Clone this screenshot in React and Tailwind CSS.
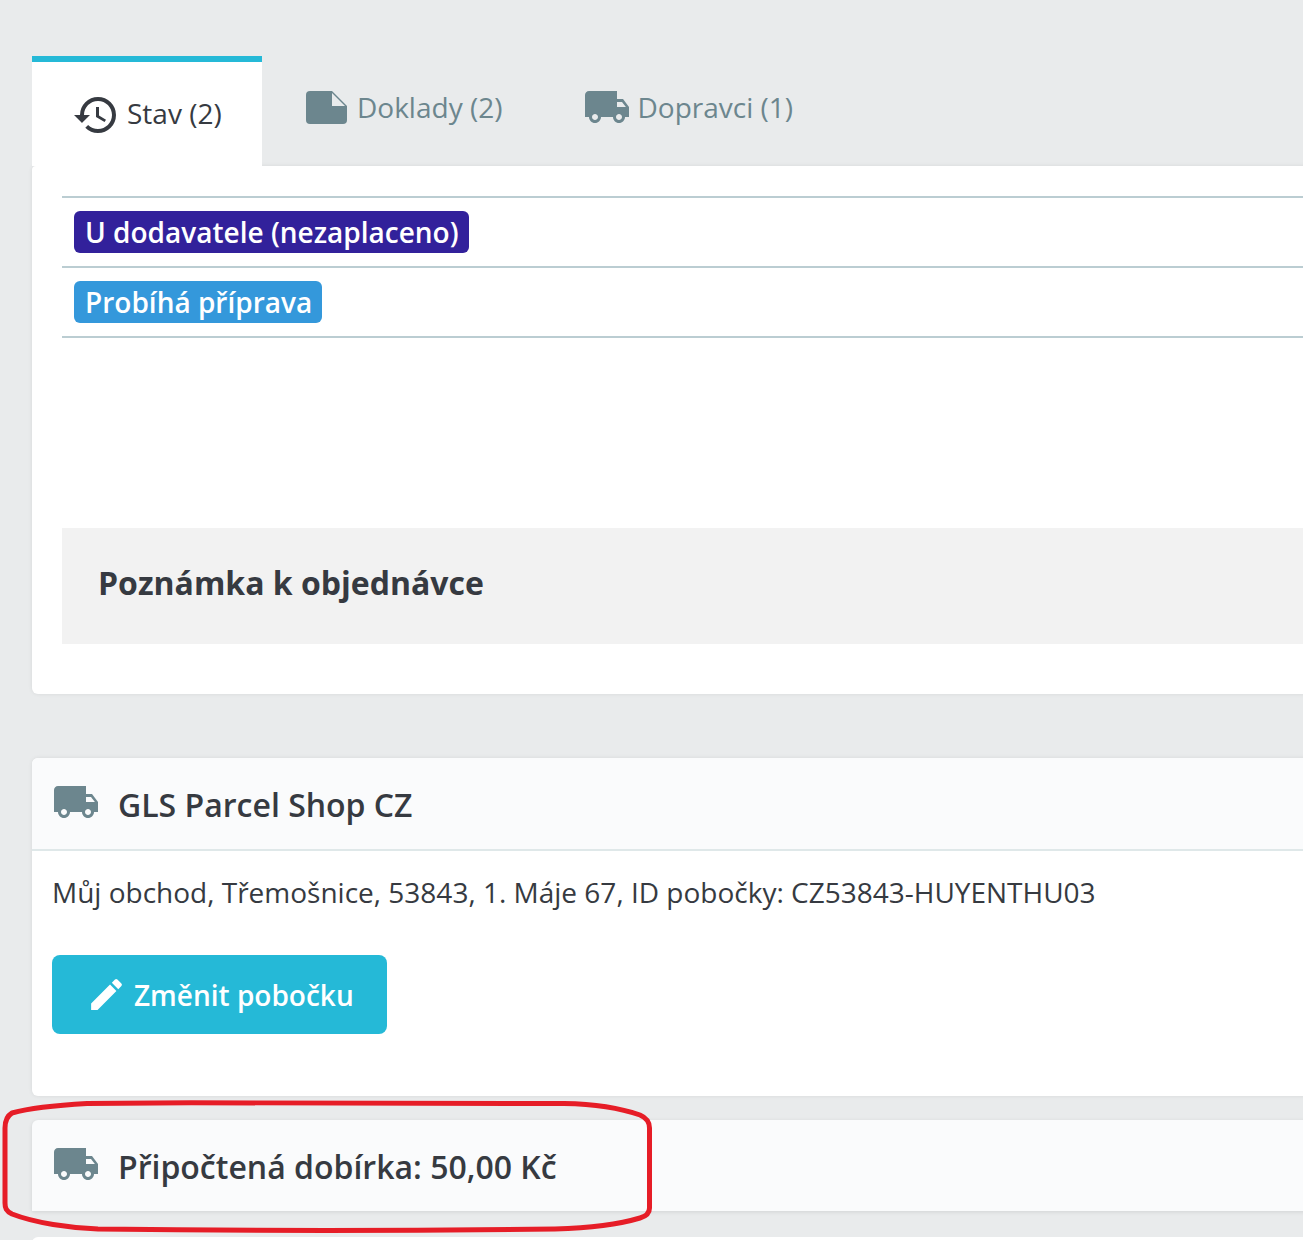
import React from 'react';
import { MdHistory, MdLocalShipping, MdEdit } from 'react-icons/md';

function FileIcon() {
    return (
        <svg width="41" height="33" viewBox="0 0 41 33" className="shrink-0">
            <path d="M4 0H26L41 15V29a4 4 0 0 1-4 4H4a4 4 0 0 1-4-4V4a4 4 0 0 1 4-4Z" fill="#6c868e" />
            <path d="M26 2V15H39Z" fill="#e9ebec" />
        </svg>
    );
}

// hand drawn marker round the last card
function Oval() {
    return (
        <svg className="absolute left-0 top-[1098px] pointer-events-none" width="660" height="136" viewBox="0 0 660 136" fill="none">
            <path
                d="M87 5.5C250 4 420 4 564 5.5C590 6 620 10 640 17C647 20 649.5 24 649.5 30V110C649.5 115 647 118 640 120C620 126 590 130 555 131C400 133 250 133 98 131C70 130 35 125 12 116C6 113 5 110 5 105V30C5 22 7 18 12 15C30 10 60 7 87 5.5Z"
                stroke="#e61d27"
                strokeWidth="5"
            />
        </svg>
    );
}

export default function App() {
    return (
        <div className="relative h-[1240px] w-[1303px] overflow-hidden bg-[#e9ebec] pt-14 pl-8 text-[#363a41] font-['Open_Sans',sans-serif]">
            {/* Tabs */}
            <div className="relative z-10 flex h-[110px] w-[1400px] items-start">
                <div className="flex h-[110px] w-[230px] items-center gap-[10px] border-t-[6px] border-[#25b9d7] bg-white pl-[41px] pb-[2px] text-[28px]">
                    <MdHistory size={48} className="-ml-[1px] -mr-[3px] mt-1 shrink-0" />
                    <span>Stav (2)</span>
                </div>
                <div className="flex items-center gap-[10px] pl-11 pt-[30px] text-[28px] text-[#6c868e]">
                    <FileIcon />
                    <span>Doklady (2)</span>
                </div>
                <div className="flex items-center gap-[6px] pl-[81px] pt-[30px] text-[28px] text-[#6c868e]">
                    <MdLocalShipping size={48} className="-my-2 shrink-0" />
                    <span>Dopravci (1)</span>
                </div>
            </div>

            {/* Stav */}
            <div className="h-[528px] w-[1400px] rounded-tl-[4px] rounded-b-[6px] bg-white pt-[30px] pl-[30px] shadow-[0_0_4px_0_rgba(0,0,0,0.08)]">
                <div className="border-t-2 border-[#bbcdd2]" />
                <div className="flex h-[70px] items-center border-b-2 border-[#bbcdd2] pl-3">
                    <span className="rounded-[6px] bg-[#32219b] pl-[11px] pr-[10px] pt-px text-[28px] leading-[41px] font-semibold text-white">U dodavatele (nezaplaceno)</span>
                </div>
                <div className="flex h-[70px] items-center border-b-2 border-[#bbcdd2] pl-3">
                    <span className="rounded-[6px] bg-[#3498db] pl-[11px] pr-[10px] pt-px text-[28px] leading-[41px] font-semibold text-white">Probíhá příprava</span>
                </div>
                <div className="mt-[190px] flex h-[116px] items-center bg-[#f2f2f2] pb-[6px] pl-[36px]">
                    <h2 className="text-[32px] font-bold">Poznámka k objednávce</h2>
                </div>
            </div>

            {/* Pobocka */}
            <div className="mt-16 h-[338px] w-[1400px] rounded-[6px] bg-white shadow-[0_0_4px_0_rgba(0,0,0,0.08)]">
                <div className="flex h-[93px] items-center gap-[19px] rounded-t-[6px] border-b-2 border-[#dfe8e9] bg-[#fafbfc] pl-5">
                    <MdLocalShipping size={48} className="-mt-[3px] -mr-[1px] shrink-0 text-[#6c868e]" />
                    <h3 className="pt-[3px] text-[32px] font-semibold">GLS Parcel Shop CZ</h3>
                </div>
                <div className="pt-[19px] pl-5">
                    <p className="text-[28px] leading-[44px]">Můj obchod, Třemošnice, 53843, 1. Máje 67, ID pobočky: CZ53843-HUYENTHU03</p>
                    <button className="mt-[41px] flex h-[79px] w-[335px] items-center gap-[7px] rounded-[8px] bg-[#25b9d7] pl-[34px] text-[28px] font-semibold text-white">
                        <MdEdit size={41} className="shrink-0" />
                        <span>Změnit pobočku</span>
                    </button>
                </div>
            </div>

            {/* Dobirka */}
            <div className="mt-6 flex h-[91px] w-[1400px] items-center gap-[19px] rounded-t-[6px] bg-[#fafbfc] pl-5 shadow-[0_1px_4px_0_rgba(0,0,0,0.1)]">
                <MdLocalShipping size={48} className="-mt-[4px] -mr-[1px] shrink-0 text-[#6c868e]" />
                <h3 className="pt-[2px] text-[32px] font-semibold">Připočtená dobírka: 50,00 Kč</h3>
            </div>
            <div className="mt-[26px] h-20 w-[1400px] rounded-t-[6px] bg-white" />

            <Oval />
        </div>
    );
}
